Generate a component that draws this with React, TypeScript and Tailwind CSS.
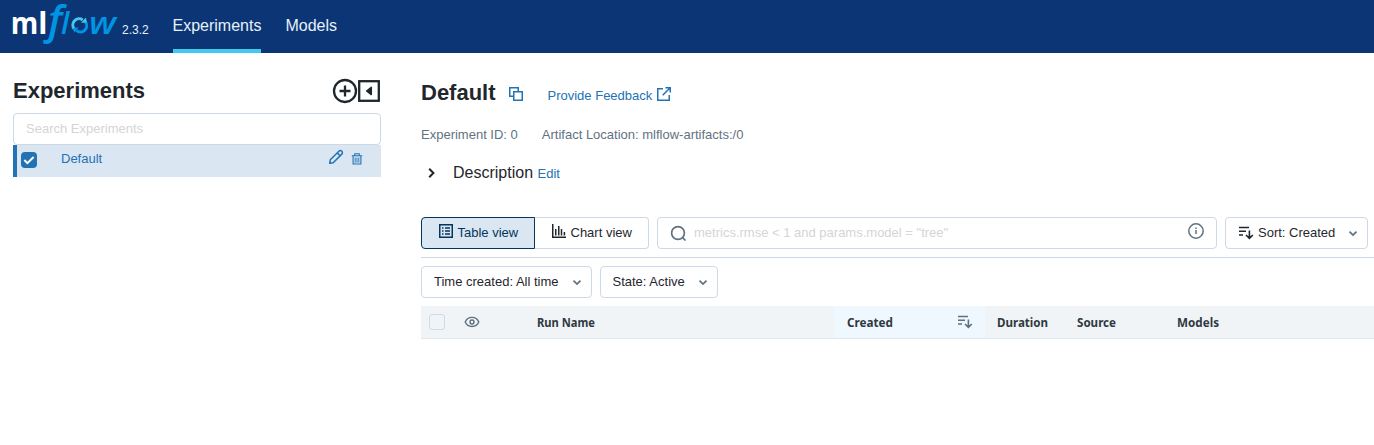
import React from 'react';

type IconProps = { className?: string };

const Logo = () => (
  <svg width="109" height="52" viewBox="0 0 109 52" className="block shrink-0 overflow-visible" aria-label="mlflow">
    <g fontFamily='"Open Sans", sans-serif'>
      <text x="-1.2" y="34" fontSize="30" fontWeight="700" fill="#fff" textLength="27.5" lengthAdjust="spacingAndGlyphs">m</text>
      <text x="26.2" y="34" fontSize="30" fontWeight="700" fill="#fff">l</text>
      <g fill="#0194e2" fontStyle="italic">
        <text transform="translate(36 34) scale(1.04 1)" x="0" y="0" fontSize="40" fontWeight="600">f</text>
        <text x="49" y="34" fontSize="30" fontWeight="600">l</text>
        <text x="77" y="34" fontSize="30" fontWeight="600" textLength="27" lengthAdjust="spacingAndGlyphs">w</text>
      </g>
    </g>
    <g fill="none" strokeWidth="3">
      <path d="M62.3 29a6.2 6.2 0 0 1 8.4-9" stroke="#43c9ed" />
      <path d="M73.1 21.6a6.2 6.2 0 0 1-8.7 8.8" stroke="#0194e2" />
    </g>
    <path d="M69 22.8l5.6-.2-.6-5z" fill="#43c9ed" />
    <path d="M66.6 27.4l-5.6.4 1.2 5z" fill="#0194e2" />
  </svg>
);

const PlusCircle = () => (
  <svg width="26" height="26" viewBox="0 0 26 26" fill="none" stroke="#1f272d" strokeWidth="2.3">
    <circle cx="13" cy="13" r="11" />
    <path d="M13 7.5v11M7.5 13h11" />
  </svg>
);

const CollapseIcon = () => (
  <svg width="22" height="22" viewBox="0 0 22 22" fill="none">
    <rect x="1.2" y="1.2" width="19.6" height="19.6" stroke="#1f272d" strokeWidth="2.3" />
    <path d="M13.3 7.4v7.2L8.6 11z" fill="#1f272d" stroke="#1f272d" strokeWidth="1.5" strokeLinejoin="round" />
  </svg>
);

const PencilIcon = () => (
  <svg width="16" height="16" viewBox="0 0 16 16" fill="none" stroke="#2272b4" strokeWidth="1.5">
    <path d="M1.7 14.3l.6-3.5 8.6-8.6a2.05 2.05 0 0 1 2.9 2.9l-8.6 8.6zM9.2 3.9l2.9 2.9" strokeLinejoin="round" />
  </svg>
);

const TrashIcon = () => (
  <svg width="12" height="12" viewBox="0 0 12 12" fill="none" stroke="#2272b4">
    <path d="M.8 2.8h10.4M3.8 2.6V.8h4.4v1.8M2.1 3v8h7.8V3" strokeWidth="1.1" />
    <path d="M4.2 4.5v5.2M6 4.5v5.2M7.8 4.5v5.2" strokeWidth=".9" />
  </svg>
);

const CopyIcon = () => (
  <svg width="16" height="16" viewBox="0 0 16 16" fill="none" stroke="#2272b4" strokeWidth="1.5">
    <path d="M5.5 10.25H1.75v-8.5h8.5V5.5" />
    <path d="M5.75 5.75h8.5v8.5h-8.5z" />
  </svg>
);

const ExternalIcon = () => (
  <svg width="16" height="16" viewBox="0 0 16 16" fill="none" stroke="#2272b4" strokeWidth="1.5">
    <path d="M7 2.75H1.75v11.5h11.5V9M9.5 1.75h4.75V6.5M14.2 1.8L6.7 9.3" />
  </svg>
);

const Chevron = ({ className }: IconProps) => (
  <svg width="10" height="10" viewBox="0 0 10 10" fill="none" stroke="currentColor" strokeWidth="1.8" className={className}>
    <path d="M1.5 2.7L5 6.1l3.5-3.4" />
  </svg>
);

const SectionChevron = () => (
  <svg width="12" height="12" viewBox="0 0 12 12" fill="none" stroke="#1f272d" strokeWidth="2" className="mr-4 ml-1">
    <path d="M4.2 1.8L8.4 6l-4.2 4.2" />
  </svg>
);

const TableIcon = () => (
  <svg width="16" height="16" viewBox="0 0 16 16" fill="none" stroke="currentColor">
    <rect x="1.75" y="1.75" width="12.5" height="12.5" strokeWidth="1.5" />
    <path d="M4 5h1.5M4 8h1.5M4 11h1.5M7 5h5M7 8h5M7 11h5" strokeWidth="1.5" />
  </svg>
);

const ChartIcon = () => (
  <svg width="16" height="16" viewBox="0 0 16 16" fill="none" stroke="currentColor" strokeWidth="1.5">
    <path d="M1.75 1v13.25H15M4.75 6v6.5M7.75 3v9.5M10.5 6v6.5M13.4 9v3.5" />
  </svg>
);

const SearchIcon = () => (
  <svg width="17" height="17" viewBox="0 0 17 17" fill="none" stroke="#5f7281" strokeWidth="1.7">
    <circle cx="8" cy="8" r="6.4" />
    <path d="M12.3 12.3l3.2 3.2" />
  </svg>
);

const InfoIcon = () => (
  <svg width="16" height="16" viewBox="0 0 16 16" fill="none" stroke="#5f7281" strokeWidth="1.5">
    <circle cx="8" cy="8" r="7.2" />
    <path d="M8 7v4M8 4.6v1.5" />
  </svg>
);

const SortIcon = ({ className }: IconProps) => (
  <svg width="16" height="16" viewBox="0 0 16 16" fill="none" stroke="currentColor" strokeWidth="1.6" className={className}>
    <path d="M1 2.5h10M1 6.2h7M1 10h4M11.4 5.5v7.7M8 10l3.4 3.4L14.8 10" />
  </svg>
);

const EyeIcon = () => (
  <svg width="16" height="16" viewBox="0 0 16 16" fill="none" stroke="#5f7281" strokeWidth="1.4">
    <path d="M1.2 8C3.8 1.8 12.2 1.8 14.8 8 12.2 14 3.8 14 1.2 8z" />
    <circle cx="8" cy="8" r="2" />
  </svg>
);

const HeaderCell = ({ label, width, text }: { label: string; width: string; text: string }) => (
  <div className={width}>
    <svg width="100" height="20" className="block overflow-visible">
      <text x="0" y="14.5" fontSize="12" fontWeight="700" fill="#2f3941" fontFamily='"Noto Sans", sans-serif' textLength={text} lengthAdjust="spacingAndGlyphs">
        {label}
      </text>
    </svg>
  </div>
);

export default function App() {
  return (
    <div className="h-[445px] w-full overflow-hidden bg-white font-['Liberation_Sans',Arial,sans-serif] text-[13px] text-[#1f272d]">
      <header className="flex h-[53px] bg-[#0b3574] pl-3 text-[#e7f1fb]">
        <Logo />
        <span className="mt-[22px] ml-px w-[50.5px] text-[12px] leading-4">2.3.2</span>
        <nav className="flex gap-6 text-[16px] leading-[51px]">
          <a className="h-[53px] border-b-4 border-[#43c9ed]">Experiments</a>
          <a>Models</a>
        </nav>
      </header>

      <div className="flex">
        <aside className="w-[381px] shrink-0 pt-[25px] pl-[13px]">
          <div className="flex h-[26px] items-center pr-px">
            <h1 className="flex-1 text-[22px] leading-[26px] font-bold">Experiments</h1>
            <PlusCircle />
            <CollapseIcon />
          </div>
          <div className="mt-[9px] h-8 rounded border border-[#cdd9e4] pl-3 leading-[30px] text-[#d5d5d5]">
            Search Experiments
          </div>
          <div className="flex h-8 border-l-4 border-[#2272b4] bg-[#dae6f2] pl-1 text-[#2272b4]">
            <span className="mt-[7px] flex size-4 items-center justify-center rounded bg-[#2272b4]">
              <svg width="12" height="12" viewBox="0 0 12 12" fill="none" stroke="#fff" strokeWidth="2">
                <path d="M1.3 6l3.1 3.1L10.6 3" />
              </svg>
            </span>
            <span className="ml-6 flex-1 leading-[27px]">Default</span>
            <span className="mt-1"><PencilIcon /></span>
            <span className="mt-2 mr-[18px] ml-[7px]"><TrashIcon /></span>
          </div>
        </aside>

        <main className="ml-10 min-w-0 flex-1 pt-[26px]">
          <div className="flex h-7 items-center">
            <h2 className="w-[87px] text-[22px] leading-7 font-bold">Default</h2>
            <span className="mt-px"><CopyIcon /></span>
            <a className="mt-[5px] ml-[23.5px] text-[#2272b4]">Provide Feedback</a>
            <span className="mt-px ml-1"><ExternalIcon /></span>
          </div>
          <div className="mt-[18px] flex gap-6 leading-5 text-[#5f7281]">
            <span>Experiment ID: 0</span>
            <span>Artifact Location: mlflow-artifacts:/0</span>
          </div>
          <div className="mt-4 flex h-6 items-center">
            <SectionChevron />
            <span className="text-[16px] leading-6">Description</span>
            <a className="mt-px ml-[4.5px] text-[#2272b4]">Edit</a>
          </div>

          <div className="mt-8 mb-2 flex h-[41px] border-b border-[#cdd9e4] pr-[6px]">
            <div className="flex h-8 leading-[30px]">
              <div className="flex w-[114px] rounded-l border border-[#04355d] bg-[#dae6f2] pl-4 text-[#04355d]">
                <span className="mt-[5px] mr-[3.5px]"><TableIcon /></span>
                Table view
              </div>
              <div className="flex w-[114px] rounded-r border border-l-0 border-[#cdd9e4] pl-4">
                <span className="mt-[5px] mr-[3.5px]"><ChartIcon /></span>
                Chart view
              </div>
            </div>
            <div className="ml-2 flex h-8 w-[560px] rounded border border-[#cdd9e4] pr-3 pl-3 leading-[30px] text-[#d5d5d5]">
              <span className="mt-[7px] mr-[7px]"><SearchIcon /></span>
              <span className="flex-1">metrics.rmse &lt; 1 and params.model = "tree"</span>
              <span className="mt-[5px]"><InfoIcon /></span>
            </div>
            <div className="ml-2 flex h-8 w-[143px] items-center rounded border border-[#cdd9e4] pl-3">
              <SortIcon className="mr-1" />
              <span className="flex-1">Sort: Created</span>
              <Chevron className="mt-[2px] mr-[9px] text-[#5f7281]" />
            </div>
          </div>

          <div className="flex gap-2">
            <div className="flex h-8 w-[171px] items-center rounded border border-[#cdd9e4] pl-3">
              <span className="flex-1">Time created: All time</span>
              <Chevron className="mt-px mr-[9px] text-[#5f7281]" />
            </div>
            <div className="flex h-8 w-[118px] items-center rounded border border-[#cdd9e4] pl-[11.5px]">
              <span className="flex-1">State: Active</span>
              <Chevron className="mt-px mr-[9px] text-[#5f7281]" />
            </div>
          </div>

          <div className="mt-2 flex h-[33px] items-center border-b border-[#e0e6eb] bg-[#f0f4f7]">
            <span className="ml-2 size-4 rounded-[3px] border border-[#cddbe8]" />
            <span className="ml-[19px] w-[73px]"><EyeIcon /></span>
            <HeaderCell label="Run Name" width="w-[297px]" text="58" />
            <div className="flex h-full w-[151px] items-center bg-[#eff7ff] pl-[13px]">
              <HeaderCell label="Created" width="w-[110px]" text="46" />
              <SortIcon className="text-[#5f7281]" />
            </div>
            <HeaderCell label="Duration" width="w-[80px] ml-3" text="51" />
            <HeaderCell label="Source" width="w-[100px]" text="39" />
            <HeaderCell label="Models" width="w-[60px]" text="42" />
          </div>
        </main>
      </div>
    </div>
  );
}
